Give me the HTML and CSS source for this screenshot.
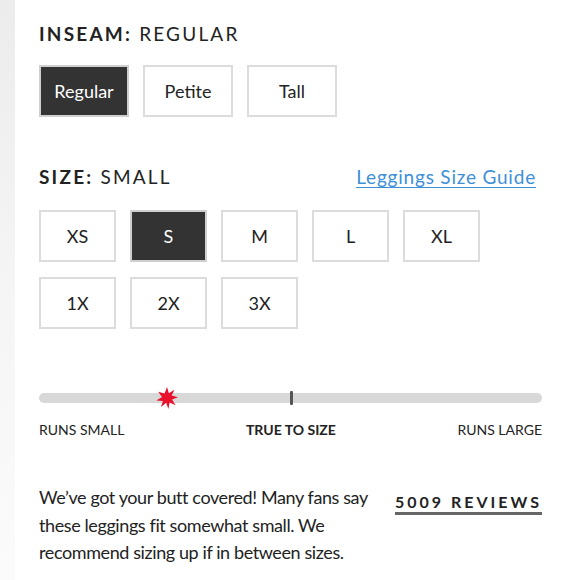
FILE: index.html
```html
<!DOCTYPE html>
<html>
<head>
<meta charset="utf-8">
<link rel="stylesheet" href="styles.css">
</head>
<body>
<div class="page">
  <div class="gutter"></div>
  <main class="content">
    <h2 class="label"><b>INSEAM:</b> REGULAR</h2>
    <div class="options inseam">
      <button class="opt selected">Regular</button>
      <button class="opt">Petite</button>
      <button class="opt">Tall</button>
    </div>

    <div class="size-head">
      <h2 class="label"><b>SIZE:</b> SMALL</h2>
      <a class="guide" href="#">Leggings Size Guide</a>
    </div>
    <div class="options sizes">
      <button class="opt">XS</button>
      <button class="opt selected">S</button>
      <button class="opt">M</button>
      <button class="opt">L</button>
      <button class="opt">XL</button>
      <button class="opt">1X</button>
      <button class="opt">2X</button>
      <button class="opt">3X</button>
    </div>

    <div class="fit">
      <div class="track">
        <span class="tick"></span>
        <svg class="star" viewBox="0 0 22 22" width="22" height="22">
          <polygon fill="#e8102a" points="11,0 12.9,6.2 18.5,2.8 15.6,8.6 22,10.2 16,12.6 19.6,18.2 13.6,15.6 12.4,22 10.2,15.8 5,20 6.9,13.9 0.4,13.4 6,10 2.2,4.8 8.6,6.6"/>
        </svg>
      </div>
      <div class="fit-labels">
        <span>RUNS SMALL</span>
        <span class="mid">TRUE TO SIZE</span>
        <span>RUNS LARGE</span>
      </div>
    </div>

    <div class="review-row">
      <p class="blurb">We’ve got your butt covered! Many fans say these leggings fit somewhat small. We recommend sizing up if in between sizes.</p>
      <a class="reviews" href="#">5009 REVIEWS</a>
    </div>
  </main>
</div>
</body>
</html>
```
FILE: styles.css
```css
html, body {
  margin: 0;
  padding: 0;
  background: #fff;
}
body {
  font-family: "Lato", "Liberation Sans", sans-serif;
  color: #222;
}
.page {
  display: flex;
  min-height: 580px;
}
.gutter {
  width: 15px;
  flex: none;
  background: linear-gradient(to bottom, #ececec 0%, #f5f5f5 50%, #fbfbfb 100%);
}
.content {
  flex: none;
  width: 503px;
  padding: 0 0 0 24px;
}
.label {
  margin: 0;
  font-size: 19px;
  font-weight: 400;
  letter-spacing: 2.2px;
  line-height: 22px;
  color: #222;
}
.label b {
  font-weight: 700;
}
.content > .label {
  padding-top: 23px;
}
.options {
  display: grid;
  gap: 15px 14px;
}
.inseam {
  grid-template-columns: repeat(3, 90px);
  margin-top: 20px;
}
.sizes {
  grid-template-columns: repeat(5, 77px);
  margin-top: 22px;
}
.opt {
  height: 52px;
  background: #fff;
  border: 2px solid #dcdcdc;
  font-family: inherit;
  font-size: 18px;
  color: #222;
  padding: 0;
}
.opt.selected {
  background: #333;
  color: #fff;
  border-color: #cfcfcf;
}
.size-head {
  display: flex;
  justify-content: space-between;
  align-items: baseline;
  margin-top: 48px;
  padding-right: 6px;
}
.guide {
  font-size: 19px;
  color: #3d8fd8;
  letter-spacing: 0.8px;
  text-decoration: underline;
  text-underline-offset: 3px;
}
.fit {
  margin-top: 64px;
}
.track {
  position: relative;
  height: 10px;
  border-radius: 5px;
  background: #d8d8d8;
}
.tick {
  position: absolute;
  left: 251px;
  top: -2px;
  width: 3px;
  height: 14px;
  background: #555;
  border-radius: 1px;
}
.star {
  position: absolute;
  left: 117px;
  top: -6px;
}
.fit-labels {
  display: flex;
  justify-content: space-between;
  margin-top: 18px;
  font-size: 14px;
  color: #222;
}
.fit-labels .mid {
  font-weight: 700;
}
.review-row {
  display: flex;
  justify-content: space-between;
  align-items: flex-start;
  margin-top: 46px;
}
.blurb {
  margin: 0;
  width: 340px;
  font-size: 18px;
  letter-spacing: -0.4px;
  line-height: 27.5px;
  color: #222;
}
.reviews {
  font-size: 16px;
  font-weight: 700;
  letter-spacing: 3px;
  color: #222;
  text-decoration: none;
  border-bottom: 3px solid #666;
  line-height: 20px;
  margin-top: 8px;
}
```
